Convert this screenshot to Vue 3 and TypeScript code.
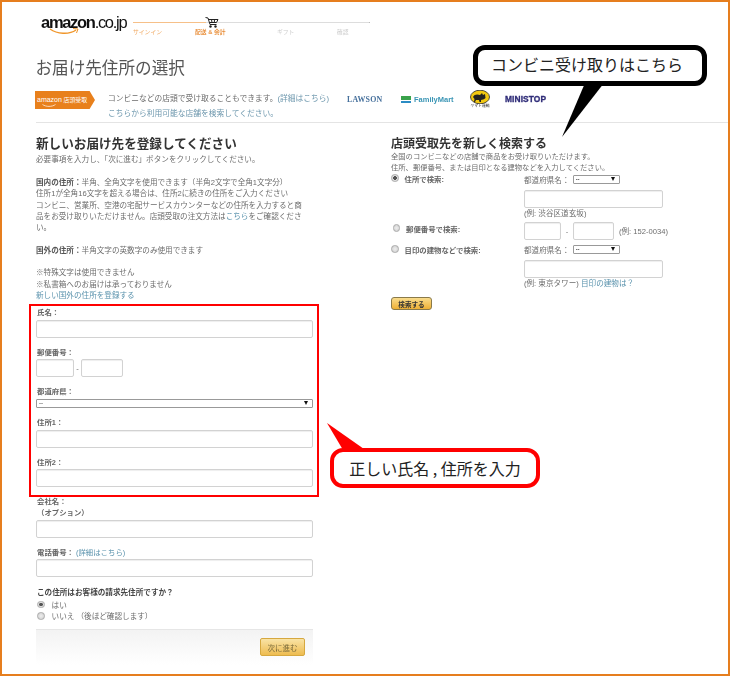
<template>
  <div class="frame">
    <header class="top page">
      <div class="logo">
        <div class="logo-text"><b>amazon</b>.co.jp</div>
        <svg class="smile" width="30" height="7" viewBox="0 0 30 7">
          <path d="M1 1 C8 6 20 7 27 2" fill="none" stroke="#f0962a" stroke-width="1.5" />
          <path d="M24 0.5 L29 1 L27.5 5" fill="none" stroke="#f0962a" stroke-width="1" />
        </svg>
      </div>
      <div class="steps">
        <div class="track">
          <span class="track-done"></span>
          <span class="track-rest"></span>
          <svg class="cart" width="14" height="11" viewBox="0 0 14 11">
            <path d="M0.5 0.5 L3 1 L5 7.5 L11.5 7.5" fill="none" stroke="#222" stroke-width="1" />
            <path d="M3.5 2.5 L13 2.5 L11.5 5.5 L4.5 5.5 M6.5 2.5 L7 5.5 M9.5 2.5 L9.3 5.5" fill="none" stroke="#222" stroke-width="1" />
            <circle cx="5.5" cy="9.5" r="1.2" fill="#222" />
            <circle cx="10.5" cy="9.5" r="1.2" fill="#222" />
          </svg>
        </div>
        <div class="step-labels">
          <span class="step step-1">サインイン</span>
          <span class="step step-2">配送 &amp; 会計</span>
          <span class="step step-3">ギフト</span>
          <span class="step step-4">確認</span>
        </div>
      </div>
    </header>

    <h1 class="title page">お届け先住所の選択</h1>

    <section class="promo page">
      <div class="badge">
        <span class="badge-a">amazon</span> 店頭受取
        <svg class="badge-smile" width="14" height="3" viewBox="0 0 14 3">
          <path d="M0.5 0.5 C4 3 10 3 13.5 0.5" fill="none" stroke="#fff" stroke-width="0.7" />
        </svg>
      </div>
      <p class="promo-text">
        コンビニなどの店頭で受け取ることもできます。<a>(詳細はこちら)</a><br />
        <a>こちらから利用可能な店舗を検索してください。</a>
      </p>
      <div class="lawson">LAWSON</div>
      <div class="family">
        <span class="family-mark"></span>
        <span>FamilyMart</span>
      </div>
      <div class="yamato">
        <svg width="20" height="14" viewBox="0 0 20 14">
          <ellipse cx="10" cy="7" rx="9.5" ry="6.8" fill="#f2c811" stroke="#222" stroke-width="0.8" />
          <path d="M3 7 C4 4 8 4 10 5 L12 3 L13 5 L15 4 L15.5 8 C14 10 12 9.5 11 10 L11 12 L9.5 12 L9 10 L6 10 L5 12 L4 12 L4.5 9 Z" fill="#222" />
        </svg>
        <span class="yamato-text">ヤマト運輸</span>
      </div>
      <div class="ministop">MINISTOP</div>
    </section>

    <main class="columns page">
      <form class="left">
        <h2 class="left-head">新しいお届け先を登録してください</h2>
        <p class="notes">
          必要事項を入力し、「次に進む」ボタンをクリックしてください。<br />
          <br />
          <b>国内の住所：</b>半角、全角文字を使用できます（半角2文字で全角1文字分）<br />
          住所1が全角16文字を超える場合は、住所2に続きの住所をご入力ください<br />
          コンビニ、営業所、空港の宅配サービスカウンターなどの住所を入力すると商<br />
          品をお受け取りいただけません。店頭受取の注文方法は<a>こちら</a>をご確認くださ<br />
          い。<br />
          <br />
          <b>国外の住所：</b>半角文字の英数字のみ使用できます<br />
          <br />
          ※特殊文字は使用できません<br />
          ※私書箱へのお届けは承っておりません<br />
          <a>新しい国外の住所を登録する</a>
        </p>

        <label class="field f-name">
          <span class="lbl">氏名：</span>
          <input class="box" type="text" />
        </label>
        <div class="field f-zip">
          <span class="lbl">郵便番号：</span>
          <div class="zip-row">
            <input class="box zip-a" type="text" />
            <span class="dash">-</span>
            <input class="box zip-b" type="text" />
          </div>
        </div>
        <div class="field f-pref">
          <span class="lbl lbl-pref">都道府県：</span>
          <div class="sel sel-wide">
            <select><option>--</option></select>
          </div>
        </div>
        <label class="field f-addr1">
          <span class="lbl">住所1：</span>
          <input class="box" type="text" />
        </label>
        <label class="field f-addr2">
          <span class="lbl">住所2：</span>
          <input class="box" type="text" />
        </label>
        <label class="field f-company">
          <span class="lbl">会社名：<br />（オプション）</span>
          <input class="box" type="text" />
        </label>
        <label class="field f-tel">
          <span class="lbl">電話番号：<a class="tel-link">(詳細はこちら)</a></span>
          <input class="box" type="text" />
        </label>

        <div class="billing">
          <div class="billing-q">この住所はお客様の請求先住所ですか？</div>
          <label class="bill-row"><input class="radio" type="radio" name="bill" checked /> はい</label>
          <label class="bill-row"><input class="radio" type="radio" name="bill" /> いいえ （後ほど確認します）</label>
        </div>

        <div class="next-bar">
          <button class="next-btn" type="button">次に進む</button>
        </div>
      </form>

      <form class="right">
        <h2 class="right-head">店頭受取先を新しく検索する</h2>
        <p class="right-intro">
          全国のコンビニなどの店舗で商品をお受け取りいただけます。<br />
          住所、郵便番号、または目印となる建物などを入力してください。
        </p>

        <div class="search-row row-a">
          <label class="search-label"><input class="radio" type="radio" name="kind" checked />住所で検索:</label>
          <div class="search-body">
            <div class="pref-line">
              <span>都道府県名：</span>
              <div class="sel sel-small"><select><option>--</option></select></div>
            </div>
            <input class="box wide-box" type="text" />
            <div class="hint">(例: 渋谷区道玄坂)</div>
          </div>
        </div>

        <div class="search-row row-b">
          <label class="search-label indent"><input class="radio" type="radio" name="kind" />郵便番号で検索:</label>
          <div class="search-body zip-line">
            <input class="box rz-a" type="text" />
            <span class="rdash">-</span>
            <input class="box rz-b" type="text" />
            <span class="hint zip-hint">(例: 152-0034)</span>
          </div>
        </div>

        <div class="search-row row-c">
          <label class="search-label"><input class="radio" type="radio" name="kind" />目印の建物などで検索:</label>
          <div class="search-body">
            <div class="pref-line">
              <span>都道府県名：</span>
              <div class="sel sel-small"><select><option>--</option></select></div>
            </div>
            <input class="box wide-box" type="text" />
            <div class="hint">(例: 東京タワー) <a>目印の建物は？</a></div>
          </div>
        </div>

        <button class="search-btn" type="button">検索する</button>
      </form>
    </main>

    <!-- annotations drawn over the page -->
    <div class="red-box"></div>

    <div class="callout callout-black">コンビニ受け取りはこちら</div>
    <svg class="tail tail-black" width="44" height="56" viewBox="0 0 44 56">
      <path d="M23 0 L0 54 L42 0 Z" fill="#000" />
    </svg>

    <svg class="tail tail-red" width="40" height="30" viewBox="0 0 40 30">
      <path d="M0 0 L37 26 L16 27 Z" fill="#f00" />
    </svg>
    <div class="callout callout-red">正しい氏名 , 住所を入力</div>
  </div>
</template>

<script setup lang="ts">
</script>

<style>
html,
body {
  margin: 0;
  background: #fff;
}
</style>

<style scoped>
.frame {
  position: relative;
  box-sizing: border-box;
  width: 730px;
  height: 676px;
  border: 2px solid #e67e1e;
  background: #fff;
  overflow: hidden;
  font-family: "Liberation Sans", "Noto Sans CJK JP", sans-serif;
  color: #6c6c6c;
  font-size: 7.6px;
}

/* the page under the annotations is a slightly soft screenshot */
.page {
  filter: blur(0.3px);
}

a {
  color: #5b93ad;
}

/* header */
.top {
  display: flex;
  height: 33px;
  padding: 11px 0 0 39px;
}

.logo {
  position: relative;
  width: 92px;
}

.logo-text {
  font-size: 16.5px;
  line-height: 18px;
  letter-spacing: -1.3px;
  color: #111;
  white-space: nowrap;
}

.smile {
  position: absolute;
  left: 8px;
  top: 15px;
}

.steps {
  width: 237px;
}

.track {
  position: relative;
  display: flex;
  height: 1px;
  margin-top: 9px;
}

.track-done {
  width: 73px;
  height: 1px;
  background: #f6c089;
}

.track-rest {
  flex: 1;
  height: 1px;
  background: #ddd;
  border-right: 1px solid #bbb;
}

.cart {
  position: absolute;
  left: 72px;
  top: -5px;
}

.step-labels {
  display: flex;
  margin-top: 5px;
  font-size: 5.8px;
  line-height: 8px;
  white-space: nowrap;
}

.step {
  color: #ccc;
}

.step-1 {
  width: 62px;
  color: #f0a860;
}

.step-2 {
  width: 82px;
  color: #ea9444;
  font-weight: bold;
}

.step-3 {
  width: 60px;
}

/* title and store banner */
.title {
  margin: 12px 0 0 33.5px;
  font-size: 16.6px;
  line-height: 22px;
  font-weight: normal;
  color: #555;
  white-space: nowrap;
}

.promo {
  display: flex;
  align-items: flex-start;
  box-sizing: border-box;
  height: 33px;
  margin: 10px 0 0 34px;
  border-bottom: 1px solid #e4e4e4;
}

.badge {
  position: relative;
  box-sizing: border-box;
  flex: none;
  width: 60px;
  height: 18px;
  margin: 1px 0 0 -1px;
  padding-left: 2px;
  background: #e8801c;
  color: #fff;
  font-size: 5.9px;
  line-height: 17px;
  white-space: nowrap;
  clip-path: polygon(0 0, 91% 0, 100% 50%, 91% 100%, 0 100%);
}

.badge-a {
  font-size: 7px;
}

.badge-smile {
  position: absolute;
  left: 7px;
  top: 12.5px;
}

.promo-text {
  flex: none;
  width: 239px;
  margin: 1px 0 0 13px;
  line-height: 15px;
  font-size: 7.75px;
  white-space: nowrap;
}

.promo-text a {
  color: #6d97ad;
}

.lawson {
  width: 54px;
  margin-top: 1px;
  font-family: "Liberation Serif", serif;
  font-weight: bold;
  font-size: 7.5px;
  line-height: 18px;
  letter-spacing: 0.2px;
  color: #46709c;
  transform: scaleX(1.05);
  transform-origin: left;
}

.family {
  display: flex;
  align-items: center;
  width: 69px;
  height: 18px;
  gap: 3px;
  font-size: 7.5px;
  font-weight: bold;
  color: #3a95b5;
}

.family-mark {
  width: 10px;
  height: 7px;
  background: linear-gradient(#3aa24b 0 55%, #fff 55% 65%, #2b8cc4 65%);
}

.yamato {
  display: flex;
  flex-direction: column;
  align-items: center;
  width: 20px;
  margin-right: 15px;
}

.yamato svg {
  display: block;
}

.yamato-text {
  font-size: 3.8px;
  line-height: 5px;
  color: #222;
  white-space: nowrap;
}

.ministop {
  font-size: 8.4px;
  font-weight: bold;
  line-height: 18px;
  letter-spacing: 0.1px;
  color: #2f2c78;
  -webkit-text-stroke: 0.3px #2f2c78;
}

/* columns */
.columns {
  display: flex;
  align-items: flex-start;
  padding-left: 34px;
}

.left {
  width: 277px;
}

.left-head {
  margin: 12.5px 0 0;
  font-size: 12.6px;
  line-height: 16px;
  color: #333;
  white-space: nowrap;
}

.notes {
  margin: 2.85px 0 0;
  line-height: 11.3px;
  white-space: nowrap;
}

.notes b {
  color: #555;
}

.field {
  display: block;
}

.lbl {
  display: block;
  margin-bottom: 1.5px;
  padding-left: 1px;
  font-weight: bold;
  font-size: 7.4px;
  line-height: 11px;
  color: #666;
  white-space: nowrap;
}

.box {
  display: block;
  box-sizing: border-box;
  width: 277px;
  height: 18px;
  margin: 0;
  padding: 0 3px;
  background: #fff;
  border: 1px solid #d2d2d2;
  border-radius: 2px;
  box-shadow: inset 0 1px 1px #eee;
}

.f-name {
  margin-top: 6px;
}

.f-zip {
  margin-top: 9px;
}

.f-pref {
  margin-top: 8.5px;
}

.lbl-pref {
  margin-bottom: 2.5px;
}

.f-addr1 {
  margin-top: 9px;
}

.f-addr2 {
  margin-top: 9px;
}

.f-company {
  margin-top: 9px;
}

.f-tel {
  margin-top: 9px;
}

.tel-link {
  font-weight: normal;
  margin-left: 2px;
}

.zip-row {
  display: flex;
  align-items: center;
}

.zip-a {
  width: 38px;
}

.zip-b {
  width: 42px;
}

.dash {
  width: 7px;
  text-align: center;
}

.sel {
  position: relative;
  box-sizing: border-box;
  height: 9px;
  border: 1px solid #999;
  border-radius: 1px;
  background: #fff;
}

.sel::after {
  content: "";
  position: absolute;
  right: 4px;
  top: 1px;
  border-left: 2.5px solid transparent;
  border-right: 2.5px solid transparent;
  border-top: 4px solid #111;
}

.sel select {
  display: block;
  appearance: none;
  width: 100%;
  height: 7px;
  padding: 0 0 0 2px;
  border: 0;
  background: transparent;
  font: bold 6px/7px "Liberation Sans", sans-serif;
  color: #333;
}

.sel-wide {
  width: 277px;
}

.sel-small {
  width: 47px;
  margin-left: 3px;
}

.billing {
  margin-top: 9.5px;
}

.billing-q {
  margin-bottom: 1px;
  padding-left: 1px;
  font-weight: bold;
  line-height: 11px;
  color: #444;
  white-space: nowrap;
}

.bill-row {
  display: flex;
  align-items: center;
  height: 11.4px;
  padding-left: 1px;
  white-space: pre;
}

.bill-row .radio {
  margin-right: 5px;
}

.radio {
  appearance: none;
  flex: none;
  width: 7.5px;
  height: 7.5px;
  margin: 0;
  border: 1px solid #aaa;
  border-radius: 50%;
  background: radial-gradient(circle, #eee, #ccc);
}

.radio:checked {
  background: radial-gradient(circle, #555 0 1.6px, #ddd 2px);
}

.next-bar {
  display: flex;
  justify-content: flex-end;
  box-sizing: border-box;
  height: 36px;
  margin-top: 8px;
  padding: 8px 8px 0 0;
  border-top: 1px solid #e6e6e6;
  background: linear-gradient(#f3f3f3, #fff);
}

.next-btn {
  width: 45px;
  height: 18px;
  padding: 0;
  border: 1px solid #d6a83f;
  border-radius: 2px;
  background: linear-gradient(#f9e3a5, #eebc50);
  font: 7.5px "Liberation Sans", "Noto Sans CJK JP", sans-serif;
  color: #7a6a3a;
}

/* right column */
.right {
  width: 300px;
  margin-left: 78px;
}

.right-head {
  margin: 12.5px 0 0;
  font-size: 12px;
  line-height: 16px;
  color: #333;
  white-space: nowrap;
}

.right-intro {
  margin: -1px 0 0;
  font-size: 7.3px;
  line-height: 11px;
  white-space: nowrap;
}

.search-row {
  display: flex;
}

.search-label {
  display: flex;
  align-items: center;
  box-sizing: border-box;
  width: 133px;
  height: 11px;
  font-weight: bold;
  font-size: 7.4px;
  color: #666;
  white-space: nowrap;
}

.search-label .radio {
  margin-right: 6px;
}

.row-a .search-label {
  margin-top: -1px;
}

.indent {
  padding-left: 1.5px;
  margin-top: 0.5px;
}

.search-body {
  width: 160px;
}

.pref-line {
  display: flex;
  align-items: center;
  height: 11px;
  white-space: nowrap;
}

.wide-box {
  width: 139px;
  margin-top: 5px;
}

.hint {
  line-height: 11px;
  white-space: nowrap;
}

.row-a {
  margin-top: 1px;
}

.row-b {
  margin-top: 3.5px;
}

.row-c {
  margin-top: 3.5px;
}

.zip-line {
  display: flex;
  align-items: center;
}

.rz-a {
  width: 37px;
}

.rz-b {
  width: 41px;
}

.rdash {
  width: 12px;
  text-align: center;
}

.zip-hint {
  margin-left: 5px;
}

.search-btn {
  display: block;
  width: 41px;
  height: 13px;
  margin-top: 8.5px;
  padding: 0;
  border: 1px solid #8a7a4a;
  border-radius: 3px;
  background: linear-gradient(#f9dc8c, #eeb035);
  font: bold 6.6px "Liberation Sans", "Noto Sans CJK JP", sans-serif;
  color: #333;
}

/* annotations */
.red-box {
  position: absolute;
  left: 27px;
  top: 302px;
  box-sizing: border-box;
  width: 290px;
  height: 193px;
  border: 2px solid #f00;
}

.callout {
  position: absolute;
  box-sizing: border-box;
  display: flex;
  align-items: center;
  justify-content: center;
  background: #fff;
  color: #222;
  white-space: pre;
  font-family: "Noto Sans CJK JP", "Liberation Sans", sans-serif;
}

.callout-black {
  left: 471px;
  top: 43px;
  width: 234px;
  height: 41px;
  padding: 0 6px 3px 0;
  border: 5px solid #000;
  border-radius: 12px;
  font-size: 16px;
}

.callout-red {
  left: 328px;
  top: 446px;
  width: 210px;
  height: 40px;
  border: 4px solid #f00;
  border-radius: 13px;
  font-size: 16px;
}

.tail {
  position: absolute;
}

.tail-black {
  left: 560px;
  top: 81px;
}

.tail-red {
  left: 325px;
  top: 421px;
}
</style>
